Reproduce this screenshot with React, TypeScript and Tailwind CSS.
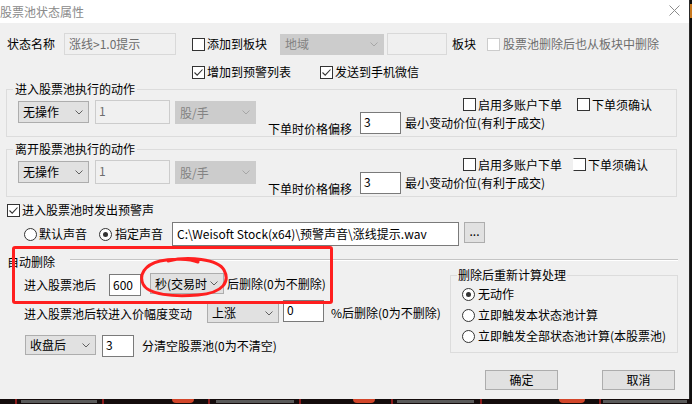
import type { ReactNode } from 'react'

function Check({ checked = false, disabled = false, clipped = false, className = '' }: { checked?: boolean; disabled?: boolean; clipped?: boolean; className?: string }) {
  return (
    <span
      className={`relative inline-block h-[13px] w-[13px] shrink-0 border bg-white ${disabled ? 'border-[#cccccc]' : 'border-[#333333]'} ${clipped ? 'border-l-transparent' : ''} ${className}`}
    >
      {checked && (
        <svg className="absolute left-0 top-0" width="11" height="11" viewBox="0 0 11 11">
          <path d="M1.5 5.5 L4.2 8.2 L9.5 2.5" fill="none" stroke="#333333" strokeWidth="1.1" />
        </svg>
      )}
    </span>
  )
}

function Radio({ on = false }: { on?: boolean }) {
  return (
    <span className="flex h-[13px] w-[13px] shrink-0 items-center justify-center rounded-full border border-[#333333] bg-white">
      {on && <span className="h-[5px] w-[5px] rounded-full bg-[#333333]" />}
    </span>
  )
}

function Chevron({ disabled = false }: { disabled?: boolean }) {
  return (
    <svg width="8" height="5" viewBox="0 0 8 5" className="shrink-0">
      <polyline points="0.5,0.5 4,4 7.5,0.5" fill="none" stroke={disabled ? '#a6a6a6' : '#606060'} strokeWidth="1" />
    </svg>
  )
}

function Select({ text, disabled = false, className = '' }: { text: string; disabled?: boolean; className?: string }) {
  return (
    <div
      className={`flex shrink-0 items-center justify-between border pl-[4px] pr-[5px] ${disabled ? 'border-[#cccccc] bg-[#cccccc] text-[#838383]' : 'border-[#adadad] bg-[#e1e1e1] text-black'} ${className}`}
    >
      <span className="whitespace-nowrap">{text}</span>
      <Chevron disabled={disabled} />
    </div>
  )
}

function Field({ value, disabled = false, className = '' }: { value: string; disabled?: boolean; className?: string }) {
  return (
    <div
      className={`flex shrink-0 border px-[3px] whitespace-nowrap ${disabled ? 'border-[#cccccc] bg-[#f0f0f0] text-[#6d6d6d]' : 'border-[#7a7a7a] bg-white text-black'} ${className}`}
    >
      {value}
    </div>
  )
}

function Label({ children, className = '' }: { children: ReactNode; className?: string }) {
  return <span className={`shrink-0 whitespace-nowrap leading-[16px] ${className}`}>{children}</span>
}

function ActionGroup({ title, className = '', clipped = false }: { title: string; className?: string; clipped?: boolean }) {
  return (
    <fieldset className={`ml-[6px] w-[671px] border border-[#dcdcdc] ${className}`}>
      <legend className="ml-[6px] px-[2px] leading-[16px]">{title}</legend>
      <div className="flex items-start pl-[11px]">
        <Select text="无操作" className="mt-[4px] h-[22px] w-[71px]" />
        <Field value="1" disabled className="ml-[6px] mt-[3px] h-[24px] w-[75px] pt-[1px]" />
        <Select text="股/手" disabled className="ml-[5px] mt-[4px] h-[23px] w-[81px]" />
        <div className="ml-[12px] flex flex-col">
          <div className="ml-[195px] mt-[1px] flex h-[13px] items-center">
            <Check />
            <Label className="ml-[2px]">启用多账户下单</Label>
            <Check clipped={clipped} className={clipped ? 'ml-[11px] w-[9px]' : 'ml-[15px]'} />
            <Label className="ml-[2px]">下单须确认</Label>
          </div>
          <div className="mt-[1px] flex items-start">
            <span className="mt-[10px] whitespace-nowrap leading-[14px]">下单时价格偏移</span>
            <Field value="3" className="ml-[8px] h-[22px] w-[41px]" />
            <Label className="ml-[4px] mt-[3px]">最小变动价位(有利于成交)</Label>
          </div>
        </div>
      </div>
    </fieldset>
  )
}

function Button({ children }: { children: ReactNode }) {
  return (
    <div className="flex h-[20px] w-[73px] items-center justify-center border border-[#adadad] bg-[#e1e1e1]">
      {children}
    </div>
  )
}

export default function App() {
  return (
    <div className="relative flex h-[404px] w-[692px] flex-col overflow-hidden bg-[#161010] font-['Noto_Sans_CJK_SC','Noto_Sans',sans-serif] text-[12px] text-black">
      <div className="flex h-[399px] w-[692px]">
        {/* Dialog */}
        <div className="flex h-[399px] w-[689px] flex-col bg-[#f0f0f0]">
          {/* Title bar */}
          <div className="flex h-[23px] items-center justify-between bg-white">
            <span className="ml-0 leading-[16px] text-[#8a8a8a]">股票池状态属性</span>
            <svg width="11" height="11" viewBox="0 0 11 11" className="mr-[9px] -mt-[3px]">
              <path d="M0.5 0.5 L10.5 10.5 M10.5 0.5 L0.5 10.5" stroke="#8c8c8c" strokeWidth="1" />
            </svg>
          </div>

          {/* Row 1 */}
          <div className="mt-[10px] flex h-[22px] items-center">
            <Label className="ml-[7px]">状态名称</Label>
            <Field value="涨线>1.0提示" disabled className="ml-[9px] h-[22px] w-[112px] items-center border-[#d9d9d9] px-[4px]" />
            <Check className="ml-[16px]" />
            <Label className="ml-[2px]">添加到板块</Label>
            <Select text="地域" disabled className="ml-[13px] h-[21px] w-[104px] text-[#8c8c8c]" />
            <Field value="" disabled className="ml-[3px] h-[22px] w-[60px] border-[#d9d9d9]" />
            <Label className="ml-[5px]">板块</Label>
            <Check disabled className="ml-[11px]" />
            <Label className="ml-[3px] text-[#6d6d6d]">股票池删除后也从板块中删除</Label>
          </div>

          {/* Row 2 */}
          <div className="mt-[9px] flex h-[16px] items-center">
            <Check checked className="ml-[192px]" />
            <Label className="ml-[2px]">增加到预警列表</Label>
            <Check checked className="ml-[29px]" />
            <Label className="ml-[2px]">发送到手机微信</Label>
          </div>

          <ActionGroup title="进入股票池执行的动作" className="mt-[1px]" />
          <ActionGroup title="离开股票池执行的动作" className="mt-[4px]" clipped />

          {/* Sound */}
          <div className="mt-[5px] flex h-[16px] items-center">
            <Check checked className="ml-[7px]" />
            <Label className="ml-[2px]">进入股票池时发出预警声</Label>
          </div>
          <div className="mt-[4px] flex items-start">
            <div className="ml-[24px] flex h-[24px] items-center">
              <Radio />
              <Label className="ml-[2px]">默认声音</Label>
              <span className="ml-[12px]">
                <Radio on />
              </span>
              <Label className="ml-[3px]">指定声音</Label>
            </div>
            <Field value="C:\Weisoft Stock(x64)\预警声音\涨线提示.wav" className="ml-[9px] h-[24px] w-[287px] items-center px-[4px]" />
            <div className="ml-[5px] flex h-[21px] w-[21px] items-center justify-center border border-[#adadad] bg-[#e1e1e1] pb-[3px] leading-none">
              ...
            </div>
          </div>

          {/* Auto delete separator */}
          <div className="mt-[8px] flex h-[16px] items-center">
            <Label className="ml-[7px]">自动删除</Label>
            <div className="mb-[4px] ml-[15px] mr-[11px] h-[2px] flex-1 border-t border-b border-t-[#c4c4c4] border-b-white" />
          </div>

          <div className="flex items-start">
            <div className="flex w-[450px] flex-col">
              <div className="mt-[3px] flex items-start">
                <Label className="ml-[24px] mt-[4px]">进入股票池后</Label>
                <Field value="600" className="ml-[13px] mt-[1px] h-[22px] w-[32px] items-center" />
                <Select text="秒(交易时" className="ml-[9px] h-[21px] w-[74px]" />
                <Label className="ml-[3px] mt-[3px]">后删除(0为不删除)</Label>
              </div>
              <div className="mt-[4px] flex items-start">
                <Label className="ml-[24px] mt-[6px]">进入股票池后较进入价幅度变动</Label>
                <Select text="上涨" className="ml-[15px] mt-[3px] h-[20px] w-[72px]" />
                <Field value="0" className="ml-[4px] h-[22px] w-[41px]" />
                <Label className="ml-[7px] mt-[5px]">%后删除(0为不删除)</Label>
              </div>
              <div className="mt-[12px] flex items-start">
                <Select text="收盘后" className="ml-[25px] h-[20px] w-[71px]" />
                <Field value="3" className="ml-[6px] h-[22px] w-[32px]" />
                <Label className="ml-[8px] mt-[3px]">分清空股票池(0为不清空)</Label>
              </div>
            </div>

            <fieldset className="-mt-[3px] w-[228px] border border-[#dcdcdc] pb-[8px]">
              <legend className="ml-[6px] px-[1px] leading-[16px]">删除后重新计算处理</legend>
              <div className="mt-[3px] flex h-[16px] items-center pl-[11px]">
                <Radio on />
                <Label className="ml-[3px]">无动作</Label>
              </div>
              <div className="mt-[5px] flex h-[16px] items-center pl-[11px]">
                <Radio />
                <Label className="ml-[3px]">立即触发本状态池计算</Label>
              </div>
              <div className="mt-[5px] flex h-[16px] items-center pl-[11px]">
                <Radio />
                <Label className="ml-[3px]">立即触发全部状态池计算(本股票池)</Label>
              </div>
            </fieldset>
          </div>

          <div className="mt-[13px] flex justify-end gap-[44px] pr-[14px]">
            <Button>确定</Button>
            <Button>取消</Button>
          </div>
        </div>
        {/* right edge of desktop behind */}
        <div className="flex w-[3px] flex-col border-l border-[#2a2a2a] bg-[#101010]">
          <div className="mt-[4px] h-[14px] w-[2px] bg-[#c7781e]" />
        </div>
      </div>

      {/* Desktop strip below the dialog */}
      <div className="flex h-[5px] items-start overflow-hidden bg-[#140c0c]">
        <div className="ml-[15px] h-[5px] w-[2px] bg-[#8b1c1c]" />
        <div className="ml-[4px] mt-[1px] h-[3px] w-[76px] bg-[#5a5a5a]" />
        <div className="ml-[5px] h-[5px] w-[2px] bg-[#8b1c1c]" />
        <div className="ml-[68px] h-[4px] w-[22px] rounded-b-full bg-[#d2462a]" />
        <div className="ml-[14px] h-[5px] w-[2px] bg-[#8b1c1c]" />
        <div className="ml-[6px] mt-[1px] h-[3px] w-[78px] bg-[#5a5a5a]" />
        <div className="ml-[5px] h-[5px] w-[2px] bg-[#8b1c1c]" />
        <div className="ml-[52px] h-[4px] w-[22px] rounded-b-full bg-[#d2462a]" />
        <div className="ml-[16px] h-[5px] w-[2px] bg-[#8b1c1c]" />
        <div className="ml-[4px] mt-[1px] h-[3px] w-[77px] bg-[#5a5a5a]" />
        <div className="ml-[6px] h-[5px] w-[2px] bg-[#8b1c1c]" />
        <div className="ml-[77px] h-[4px] w-[26px] rounded-b-full bg-[#d2462a]" />
        <div className="ml-[14px] h-[5px] w-[2px] bg-[#8b1c1c]" />
        <div className="ml-[2px] mt-[1px] h-[3px] w-[84px] bg-[#5a5a5a]" />
      </div>

      {/* Red annotation marks drawn over the screenshot */}
      <div className="pointer-events-none absolute left-[12px] top-[246px] h-[58px] w-[321px] rounded-[3px] border-[3px] border-[#ff1f1f]" />
      <svg className="pointer-events-none absolute left-[138px] top-[257px]" width="94" height="42" viewBox="0 0 94 42">
        <path
          d="M30 4 C50 -1 80 2 86 13 C92 24 86 36 60 38 C36 40 10 38 5 27 C1 18 6 8 22 4 C34 1 52 2 60 5"
          fill="none"
          stroke="#ff1f1f"
          strokeWidth="3"
          strokeLinecap="round"
        />
      </svg>
    </div>
  )
}
